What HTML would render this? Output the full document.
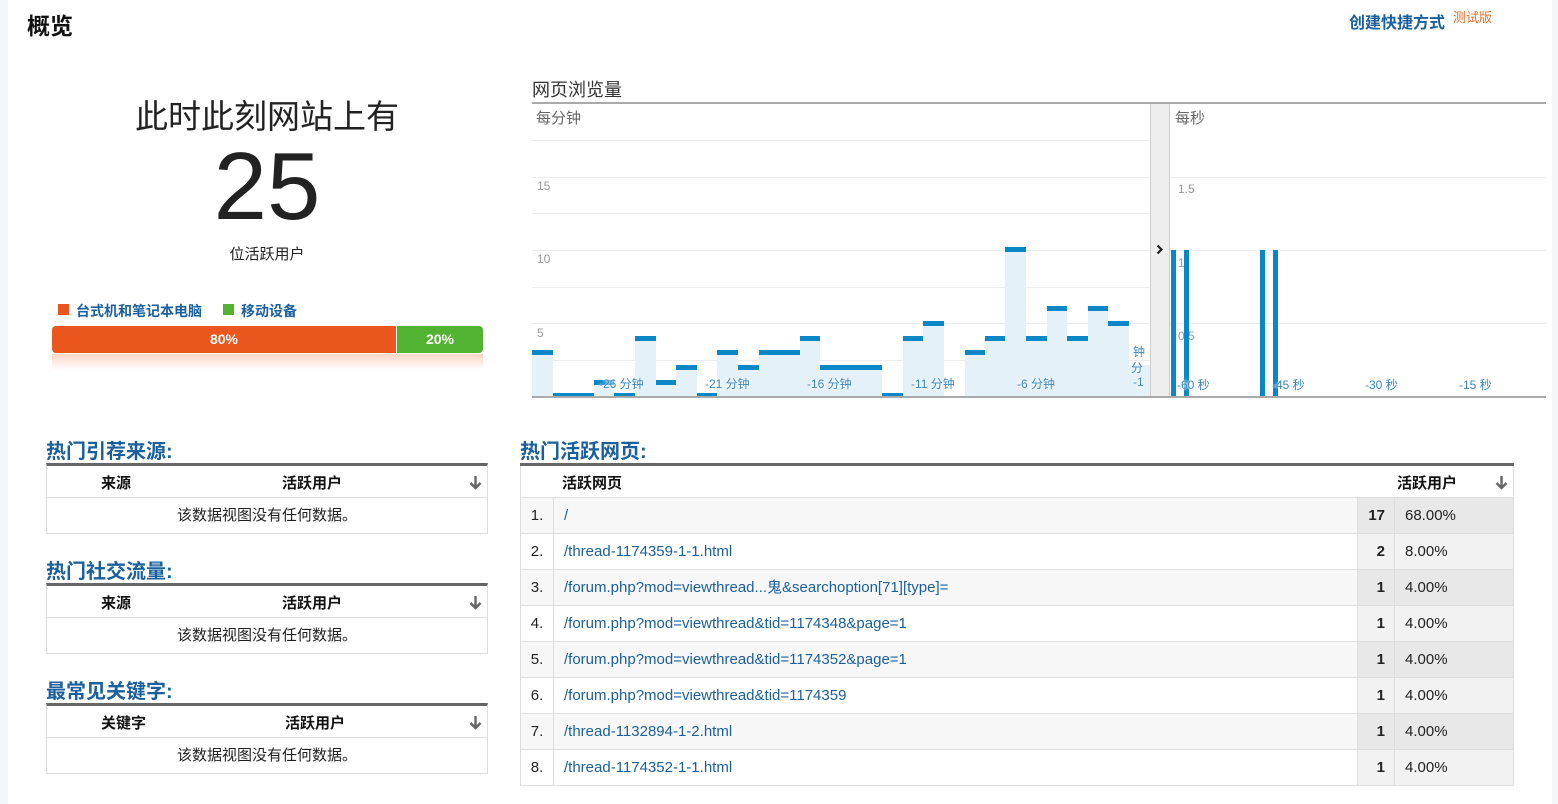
<!DOCTYPE html>
<html><head><meta charset="utf-8"><style>
*{margin:0;padding:0;box-sizing:border-box}
body{width:1558px;height:804px;background:#fff;position:relative;overflow:hidden;font-family:"Liberation Sans","Noto Sans CJK SC",sans-serif;color:#222}
.a{position:absolute}
.b{position:absolute;background:#e4f1f8;border-top:5px solid #0a87c6}
.g{position:absolute;height:1px;background:#ececec}
.xl{position:absolute;top:375px;font-size:12px;color:#3a87c0;text-shadow:0 0 2px #fff,0 0 2px #fff;white-space:nowrap}
.yl{position:absolute;font-size:12px;color:#999}
.sec{position:absolute;font-size:20px;font-weight:bold;color:#1a5f9e}
.lt{position:absolute;left:46px;width:442px;border:1px solid #ddd;border-top:3px solid #666;font-size:15px}
.lt .h{height:32px;border-bottom:1px solid #ddd;position:relative;font-weight:bold;color:#111}
.lt .r{height:35px;line-height:35px;text-align:center;color:#222}
.arr{position:absolute;right:5px;top:9px;width:13px;height:15px}
.row{position:absolute;left:520px;width:994px;height:36px;border:1px solid #ddd;border-top:none;font-size:15px;line-height:35px}
.row div{position:absolute;top:0;height:35px}
.c1{left:0;width:33px;text-align:center;border-right:1px solid #ddd}
.c2{left:43px;color:#1a5f9e;white-space:nowrap}
.c3{left:836px;width:38px;text-align:right;padding-right:9px;font-weight:bold;border-left:1px solid #ddd;border-right:1px solid #ddd}
.c4{left:874px;width:118px;padding-left:10px}
.o{background:#f7f7f7}.o .c3,.o .c4{background:#e8e8e8}
.e .c3,.e .c4{background:#f2f2f2}
</style></head><body>
<svg width="0" height="0" style="position:absolute"><defs><symbol id="ar" viewBox="0 0 13 15"><path d="M6.5 1V13M1.5 8L6.5 13L11.5 8" stroke="#666" stroke-width="2.4" fill="none"/></symbol></defs></svg>
<div class="a" style="left:0;top:0;width:8px;height:804px;background:#f4f5f7"></div>
<div class="a" style="left:1552px;top:0;width:6px;height:804px;background:#f4f5f7"></div>
<div class="a" style="left:27px;top:7px;font-size:23px;font-weight:bold;color:#111">概览</div>
<div class="a" style="left:1349px;top:9px;font-size:16px;font-weight:bold;color:#1a5f9e">创建快捷方式</div>
<div class="a" style="left:1453px;top:7px;font-size:13px;color:#e8702a">测试版</div>

<div class="a" style="left:52px;top:90px;width:430px;text-align:center;font-size:33px;color:#222">此时此刻网站上有</div>
<div class="a" style="left:52px;top:134px;width:430px;text-align:center;font-size:96px;line-height:106px;color:#222">25</div>
<div class="a" style="left:52px;top:243px;width:430px;text-align:center;font-size:15px;color:#222">位活跃用户</div>

<div class="a" style="left:58px;top:304px;width:11px;height:11px;background:#ea561d"></div>
<div class="a" style="left:76px;top:301px;font-size:14px;font-weight:bold;color:#1a5f9e">台式机和笔记本电脑</div>
<div class="a" style="left:223px;top:304px;width:11px;height:11px;background:#52b333"></div>
<div class="a" style="left:241px;top:301px;font-size:14px;font-weight:bold;color:#1a5f9e">移动设备</div>
<div class="a" style="left:52px;top:326px;width:344px;height:27px;background:#ea561d;border-radius:4px 0 0 4px;color:#fff;font-weight:bold;font-size:14px;text-align:center;line-height:27px">80%</div>
<div class="a" style="left:397px;top:326px;width:86px;height:27px;background:#52b333;border-radius:0 4px 4px 0;color:#fff;font-weight:bold;font-size:14px;text-align:center;line-height:27px">20%</div>
<div class="a" style="left:52px;top:354px;width:431px;height:16px;background:linear-gradient(#fbd6c6,#fff)"></div>

<div class="a" style="left:532px;top:76px;font-size:18px;color:#333">网页浏览量</div>
<div class="a" style="left:532px;top:102px;width:1014px;height:2px;background:#aaa"></div>
<div class="a" style="left:536px;top:107px;font-size:15px;color:#666">每分钟</div>
<div class="g" style="left:532px;top:140px;width:618px"></div>
<div class="g" style="left:532px;top:177px;width:1014px"></div>
<div class="g" style="left:532px;top:213px;width:618px"></div>
<div class="g" style="left:532px;top:250px;width:1014px"></div>
<div class="g" style="left:532px;top:287px;width:618px"></div>
<div class="g" style="left:532px;top:323px;width:1014px"></div>
<div class="g" style="left:532px;top:360px;width:618px"></div>
<div class="yl" style="left:537px;top:179px">15</div>
<div class="yl" style="left:537px;top:252px">10</div>
<div class="yl" style="left:537px;top:326px">5</div>
<div class="yl" style="left:1178px;top:182px">1.5</div>
<div class="yl" style="left:1178px;top:256px">1</div>
<div class="yl" style="left:1178px;top:329px">0.5</div>
<div class="b" style="left:532px;top:350px;width:21px;height:47px"></div>
<div class="b" style="left:553px;top:393px;width:20px;height:4px"></div>
<div class="b" style="left:573px;top:393px;width:21px;height:4px"></div>
<div class="b" style="left:594px;top:380px;width:20px;height:17px"></div>
<div class="b" style="left:614px;top:393px;width:21px;height:4px"></div>
<div class="b" style="left:635px;top:336px;width:21px;height:61px"></div>
<div class="b" style="left:656px;top:380px;width:20px;height:17px"></div>
<div class="b" style="left:676px;top:365px;width:21px;height:32px"></div>
<div class="b" style="left:697px;top:393px;width:20px;height:4px"></div>
<div class="b" style="left:717px;top:350px;width:21px;height:47px"></div>
<div class="b" style="left:738px;top:365px;width:21px;height:32px"></div>
<div class="b" style="left:759px;top:350px;width:20px;height:47px"></div>
<div class="b" style="left:779px;top:350px;width:21px;height:47px"></div>
<div class="b" style="left:800px;top:336px;width:20px;height:61px"></div>
<div class="b" style="left:820px;top:365px;width:21px;height:32px"></div>
<div class="b" style="left:841px;top:365px;width:21px;height:32px"></div>
<div class="b" style="left:862px;top:365px;width:20px;height:32px"></div>
<div class="b" style="left:882px;top:393px;width:21px;height:4px"></div>
<div class="b" style="left:903px;top:336px;width:20px;height:61px"></div>
<div class="b" style="left:923px;top:321px;width:21px;height:76px"></div>
<div class="b" style="left:965px;top:350px;width:20px;height:47px"></div>
<div class="b" style="left:985px;top:336px;width:21px;height:61px"></div>
<div class="b" style="left:1005px;top:247px;width:21px;height:150px"></div>
<div class="b" style="left:1026px;top:336px;width:21px;height:61px"></div>
<div class="b" style="left:1047px;top:306px;width:20px;height:91px"></div>
<div class="b" style="left:1067px;top:336px;width:21px;height:61px"></div>
<div class="b" style="left:1088px;top:306px;width:20px;height:91px"></div>
<div class="b" style="left:1108px;top:321px;width:21px;height:76px"></div>
<div class="a" style="left:1129px;top:365px;width:21px;height:32px;background:#e4f1f8"></div>
<div class="xl" style="left:599px">-26 分钟</div>
<div class="xl" style="left:705px">-21 分钟</div>
<div class="xl" style="left:807px">-16 分钟</div>
<div class="xl" style="left:911px">-11 分钟</div>
<div class="xl" style="left:1017px">-6 分钟</div>
<div class="xl" style="left:1133px;top:343px">钟</div>
<div class="xl" style="left:1131px;top:359px">分</div>
<div class="xl" style="left:1133px">-1</div>
<div class="a" style="left:1150px;top:104px;width:20px;height:293px;background:#eee;border-left:1px solid #ccc;border-right:1px solid #ccc"></div>
<svg class="a" style="left:1156px;top:244px" width="8" height="11" viewBox="0 0 8 11"><path d="M1.5 1.5L5.5 5.5L1.5 9.5" stroke="#222" stroke-width="2.2" fill="none"/></svg>
<div class="a" style="left:1175px;top:107px;font-size:15px;color:#666">每秒</div>
<div class="a" style="left:1171px;top:250px;width:5px;height:147px;background:#0a87c6"></div>
<div class="a" style="left:1184px;top:250px;width:5px;height:147px;background:#0a87c6"></div>
<div class="a" style="left:1260px;top:250px;width:5px;height:147px;background:#0a87c6"></div>
<div class="a" style="left:1273px;top:250px;width:5px;height:147px;background:#0a87c6"></div>
<div class="xl" style="left:1177px;top:376px">-60 秒</div>
<div class="xl" style="left:1272px;top:376px">-45 秒</div>
<div class="xl" style="left:1365px;top:376px">-30 秒</div>
<div class="xl" style="left:1459px;top:376px">-15 秒</div>
<div class="a" style="left:532px;top:396px;width:1014px;height:2px;background:#aaa"></div>

<div class="sec" style="left:46px;top:435px">热门引荐来源:</div>
<div class="lt" style="top:463px"><div class="h"><span class="a" style="left:54px;top:6px">来源</span><span class="a" style="left:235px;top:6px">活跃用户</span><svg class="arr"><use href="#ar"/></svg></div><div class="r">该数据视图没有任何数据。</div></div>
<div class="sec" style="left:46px;top:555px">热门社交流量:</div>
<div class="lt" style="top:583px"><div class="h"><span class="a" style="left:54px;top:6px">来源</span><span class="a" style="left:235px;top:6px">活跃用户</span><svg class="arr"><use href="#ar"/></svg></div><div class="r">该数据视图没有任何数据。</div></div>
<div class="sec" style="left:46px;top:675px">最常见关键字:</div>
<div class="lt" style="top:703px"><div class="h"><span class="a" style="left:54px;top:6px">关键字</span><span class="a" style="left:238px;top:6px">活跃用户</span><svg class="arr"><use href="#ar"/></svg></div><div class="r">该数据视图没有任何数据。</div></div>

<div class="sec" style="left:520px;top:435px">热门活跃网页:</div>
<div class="a" style="left:520px;top:463px;width:994px;height:3px;background:#666"></div>
<div class="a" style="left:520px;top:466px;width:994px;height:32px;border:1px solid #ddd;border-top:none;font-size:15px;font-weight:bold;color:#111">
<span class="a" style="left:41px;top:6px">活跃网页</span><span class="a" style="left:876px;top:6px">活跃用户</span><svg class="arr"><use href="#ar"/></svg></div>
<div class="row o" style="top:498px"><div class="c1">1.</div><div class="c2">/</div><div class="c3">17</div><div class="c4">68.00%</div></div>
<div class="row e" style="top:534px"><div class="c1">2.</div><div class="c2">/thread-1174359-1-1.html</div><div class="c3">2</div><div class="c4">8.00%</div></div>
<div class="row o" style="top:570px"><div class="c1">3.</div><div class="c2">/forum.php?mod=viewthread...鬼&amp;searchoption[71][type]=</div><div class="c3">1</div><div class="c4">4.00%</div></div>
<div class="row e" style="top:606px"><div class="c1">4.</div><div class="c2">/forum.php?mod=viewthread&amp;tid=1174348&amp;page=1</div><div class="c3">1</div><div class="c4">4.00%</div></div>
<div class="row o" style="top:642px"><div class="c1">5.</div><div class="c2">/forum.php?mod=viewthread&amp;tid=1174352&amp;page=1</div><div class="c3">1</div><div class="c4">4.00%</div></div>
<div class="row e" style="top:678px"><div class="c1">6.</div><div class="c2">/forum.php?mod=viewthread&amp;tid=1174359</div><div class="c3">1</div><div class="c4">4.00%</div></div>
<div class="row o" style="top:714px"><div class="c1">7.</div><div class="c2">/thread-1132894-1-2.html</div><div class="c3">1</div><div class="c4">4.00%</div></div>
<div class="row e" style="top:750px"><div class="c1">8.</div><div class="c2">/thread-1174352-1-1.html</div><div class="c3">1</div><div class="c4">4.00%</div></div>
</body></html>
